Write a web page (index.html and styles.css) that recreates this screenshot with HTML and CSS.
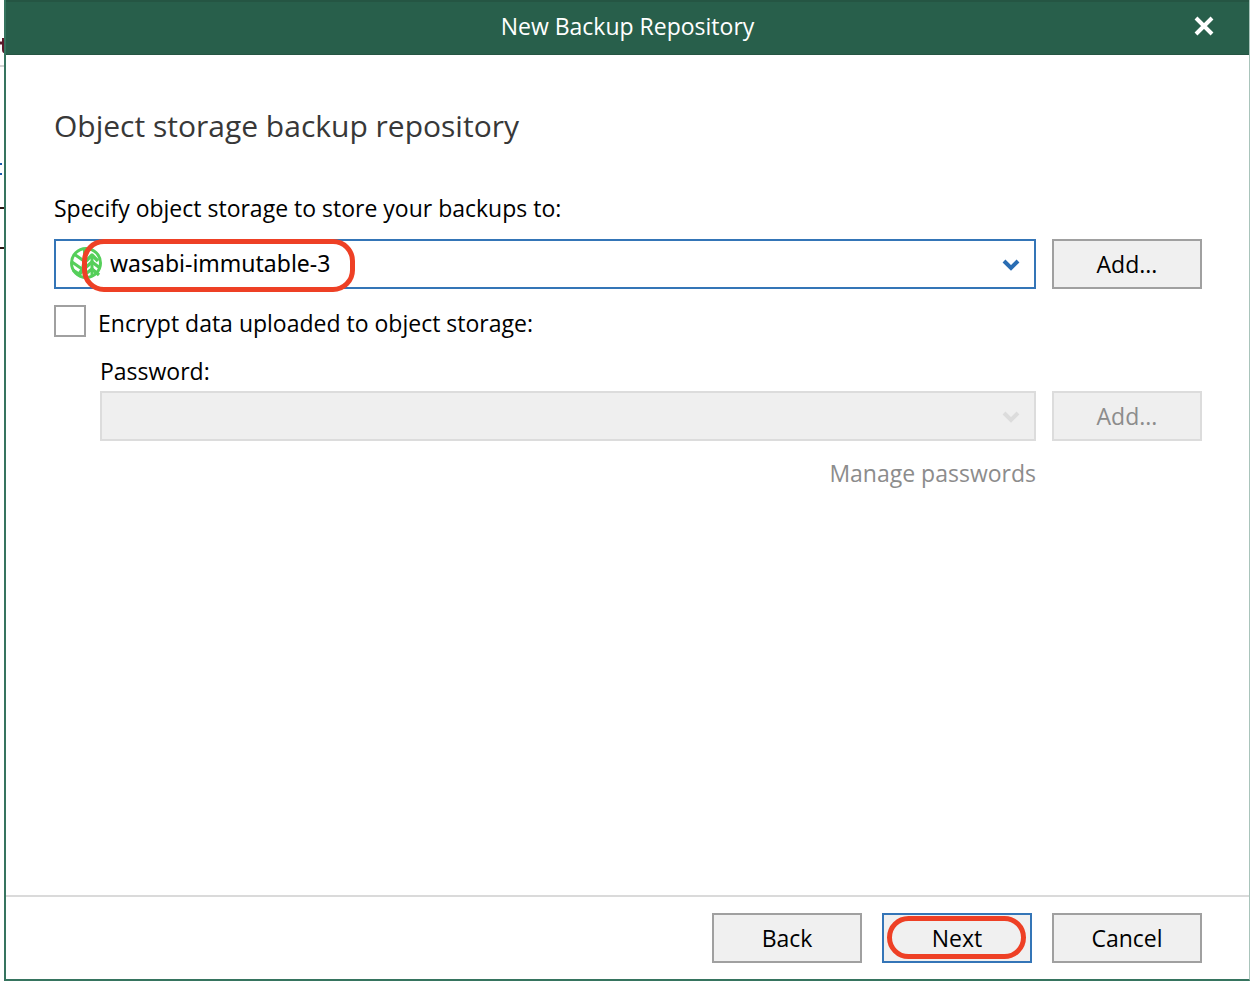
FILE: index.html
```html
<!DOCTYPE html>
<html lang="en">
<head>
<meta charset="utf-8">
<meta name="viewport" content="width=device-width, initial-scale=1">
<title>New Backup Repository</title>
<link rel="stylesheet" href="styles.css">
</head>
<body>
<svg class="backdrop" width="4" height="260" viewBox="0 0 4 260" aria-hidden="true">
  <path d="M0 43h4" stroke="#5b1a2a" stroke-width="3"/>
  <path d="M3 38v11q0 3 1 3" stroke="#5b1a2a" stroke-width="2" fill="none"/>
  <path d="M0 66h4" stroke="#d4d4d4" stroke-width="2"/>
  <path d="M0 164h2M0 174h2" stroke="#1c5cab" stroke-width="2"/>
  <path d="M0 208h4M0 248h4" stroke="#2a1512" stroke-width="2"/>
</svg>
<main class="dialog">
  <header class="titlebar">
    <span class="titlebar-text">New Backup Repository</span>
    <button class="close" type="button" aria-label="Close">
      <svg width="20" height="20" viewBox="0 0 20 20"><path d="M2 2l16 16M18 2L2 18" stroke="#fff" stroke-width="4" fill="none"/></svg>
    </button>
  </header>
  <form class="content">
    <h1 class="heading">Object storage backup repository</h1>
    <label class="label" for="storage">Specify object storage to store your backups to:</label>
    <div class="row">
      <div class="combo">
        <select class="select" id="storage"><option>wasabi-immutable-3</option></select>
        <svg class="logo" width="34" height="34" viewBox="0 0 34 34" aria-hidden="true">
          <g stroke="#55cf5a" fill="none" stroke-linejoin="round">
            <circle cx="17" cy="17" r="14.5" stroke-width="3"/>
            <path d="M16 3v10l-2 10-5 7" stroke-width="4"/>
            <path d="M5 8l10 7M3 16l10 7M4 24l6 4" stroke-width="3"/>
            <path d="M23 9v22" stroke-width="3"/>
            <path d="M17 15l6-6 6 6M16 22l7-6 8 6M15 29l8-6 7 6" stroke-width="3.4"/>
          </g>
        </svg>
        <svg class="chevron" width="18" height="12" viewBox="0 0 18 12" aria-hidden="true"><path d="M2 2l7 7 7-7" fill="none" stroke="currentColor" stroke-width="4"/></svg>
        <span class="mark mark-storage"></span>
      </div>
      <button class="button" type="button">Add...</button>
    </div>
    <div class="check-row">
      <input class="checkbox" type="checkbox" id="encrypt">
      <label class="check-label" for="encrypt">Encrypt data uploaded to object storage:</label>
    </div>
    <div class="nested">
      <label class="password-label" for="password">Password:</label>
      <div class="row">
        <div class="combo">
          <select class="select" id="password" disabled></select>
          <svg class="chevron chevron-off" width="18" height="12" viewBox="0 0 18 12" aria-hidden="true"><path d="M2 2l7 7 7-7" fill="none" stroke="currentColor" stroke-width="4"/></svg>
        </div>
        <button class="button" type="button" disabled>Add...</button>
      </div>
      <div class="link-row"><a class="manage" href="#passwords">Manage passwords</a></div>
    </div>
  </form>
  <footer class="footer">
    <button class="button" type="button">Back</button>
    <button class="button button-primary" type="button">Next<span class="mark mark-next"></span></button>
    <button class="button" type="button">Cancel</button>
  </footer>
</main>
</body>
</html>
```
FILE: styles.css
```css
* {
  box-sizing: border-box;
}

body {
  display: flex;
  min-height: 100vh;
  margin: 0;
  padding-bottom: 3px;
  background: #fff;
  color: #000;
  font: 23px/32px "Open Sans", "Noto Sans", sans-serif;
}

.backdrop {
  flex: none;
}

.dialog {
  display: flex;
  flex: 1;
  flex-direction: column;
  min-width: 0;
  border: 2px solid #36745f;
  border-width: 0 1px 2px 2px;
  border-right-color: #a9c4bb;
}

.titlebar {
  display: grid;
  grid-template-columns: 64px 1fr 64px;
  align-items: center;
  height: 55px;
  padding-bottom: 4px;
  border-top: 2px solid #255543;
  border-bottom: 1px solid #255543;
  background: #285f4b;
  color: #fff;
}

.titlebar-text {
  grid-column: 2;
  text-align: center;
}

.close {
  display: flex;
  justify-self: start;
  padding: 6px;
  border: 0;
  margin-left: 3px;
  background: none;
}

.content {
  flex: 1;
  padding: 51px 47px 24px 48px;
}

.heading {
  margin: 0 0 46px;
  color: #383838;
  font: inherit;
  font-size: 30px;
  line-height: 40px;
}

.label {
  display: block;
  margin-bottom: 15px;
}

.row {
  display: flex;
  gap: 16px;
}

.combo {
  position: relative;
  flex: 1;
}

.select {
  display: block;
  width: 100%;
  height: 50px;
  padding: 0 48px 2px 54px;
  border: 2px solid #3475b7;
  border-radius: 0;
  appearance: none;
  background: #fff;
  color: #000;
  font: 23px/32px "Noto Sans", sans-serif;
}

.select:disabled {
  border-color: #dcdcdc;
  background: #efefef;
  opacity: 1;
}

.logo {
  position: absolute;
  top: 7px;
  left: 15px;
}

.chevron {
  position: absolute;
  top: 20px;
  right: 16px;
  color: #2a6db3;
}

.chevron-off {
  color: #dcdcdc;
}

.mark {
  position: absolute;
  border: 5px solid #ee4025;
  pointer-events: none;
}

.mark-storage {
  top: 0;
  left: 28px;
  width: 273px;
  height: 53px;
  border-radius: 22px;
}

.mark-next {
  inset: 1px 4px 2px 3px;
  border-radius: 24px;
}

.button {
  position: relative;
  flex: none;
  width: 150px;
  height: 50px;
  padding: 0;
  border: 2px solid #a0a0a0;
  background: #f0f0f0;
  color: #000;
  font: inherit;
}

.button:disabled {
  border-color: #dcdcdc;
  background: #efefef;
  color: #8c8c8c;
}

.button-primary {
  border-color: #3475b7;
}

.check-row {
  display: flex;
  align-items: center;
  gap: 12px;
  margin-top: 16px;
}

.check-label {
  padding-top: 2px;
  margin-bottom: -2px;
}

.checkbox {
  width: 32px;
  height: 32px;
  border: 2px solid #a0a0a0;
  margin: 0;
  appearance: none;
  background: #fff;
}

.checkbox:checked {
  background: #3475b7;
}

.nested {
  margin: 18px 0 0 46px;
}

.password-label {
  display: block;
  margin-bottom: 4px;
}

.link-row {
  margin: 16px 166px 0 0;
  text-align: right;
}

.manage {
  color: #8c8c8c;
  text-decoration: none;
}

.footer {
  display: flex;
  justify-content: flex-end;
  gap: 20px;
  padding: 16px 47px 16px 48px;
  border-top: 2px solid #dadada;
}
```
